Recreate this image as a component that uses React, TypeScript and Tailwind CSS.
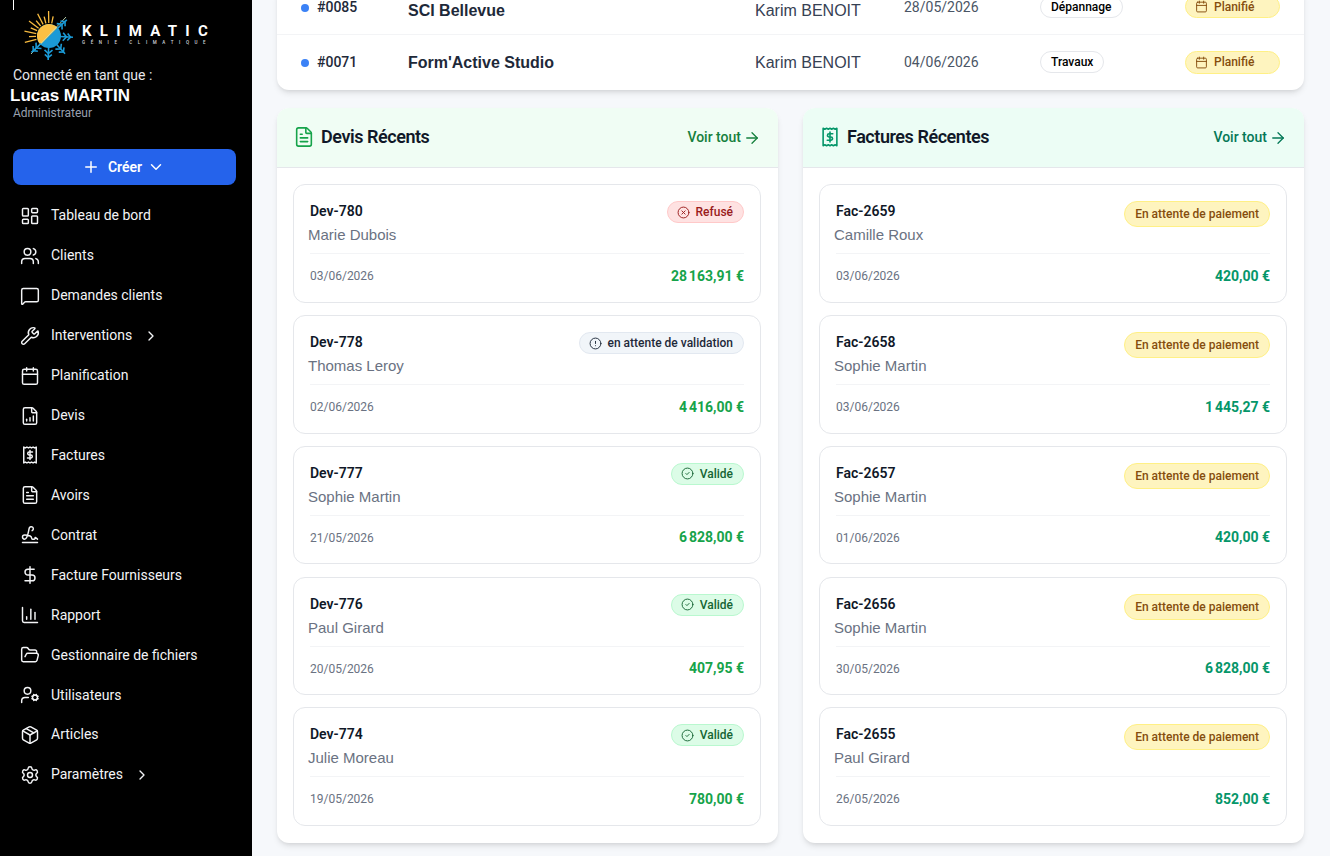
import React from "react";
import {
  LayoutDashboard, Users, MessageSquare, Wrench, Calendar, FileChartColumnIncreasing, FileText,
  Signature, DollarSign, ChartColumn, FolderOpen, UserCog, Package, Settings, ChevronRight,
  ChevronDown, Plus, ArrowRight, CircleX, CircleAlert, CircleCheck,
} from "lucide-react";

function ReceiptDollar({ className = "", strokeWidth = 2 }: { className?: string; strokeWidth?: number }) {
  return (
    <svg viewBox="0 0 24 24" fill="none" stroke="currentColor" strokeWidth={strokeWidth} strokeLinecap="round" strokeLinejoin="round" className={className}>
      <path d="M4.5 2.5l1.9 1 1.9-1 1.9 1 1.8-1 1.8 1 1.9-1 1.9 1 1.9-1v19l-1.9-1-1.9 1-1.9-1-1.8 1-1.8-1-1.9 1-1.9-1-1.9 1z" />
      <path d="M12 6.5v11" />
      <path d="M15 8.5h-4a1.75 1.75 0 0 0 0 3.5h2a1.75 1.75 0 0 1 0 3.5H9" />
    </svg>
  );
}

function Logo() {
  const rays = [165, 178, 191, 204, 217, 230, 243, 256, 269, 282];
  const arms = [-42, 3, 48, 92, 137];
  const cx = 25, cy = 26;
  return (
    <svg viewBox="0 0 50 50" className="w-[50px] h-[50px] shrink-0">
      {rays.map((a, i) => {
        const r = (a * Math.PI) / 180;
        const o = i % 2 === 0 ? 25 : 20;
        return (
          <line key={a} x1={cx + 13 * Math.cos(r)} y1={cy + 13 * Math.sin(r)} x2={cx + o * Math.cos(r)} y2={cy + o * Math.sin(r)} stroke="#f8bb3f" strokeWidth={1.3} />
        );
      })}
      <circle cx={cx} cy={cy} r={12} fill="#1b9ad6" />
      <path d={`M${cx - 8.5} ${cy + 8.5}A12 12 0 0 1 ${cx + 8.5} ${cy - 8.5}z`} fill="#fcc043" />
      <line x1={7} y1={44} x2={42} y2={7} stroke="#c8dfb8" strokeWidth={0.9} />
      {arms.map((a) => (
        <g key={a} transform={`rotate(${a} ${cx} ${cy})`} stroke="#1b9ad6" strokeWidth={1.6} fill="none">
          <line x1={cx + 11} y1={cy} x2={cx + 24} y2={cy} />
          <path d={`M${cx + 14} ${cy - 4}L${cx + 17.5} ${cy}L${cx + 14} ${cy + 4}`} />
          <path d={`M${cx + 18.5} ${cy - 3.5}L${cx + 21.5} ${cy}L${cx + 18.5} ${cy + 3.5}`} />
        </g>
      ))}
    </svg>
  );
}

const nav: { label: string; Icon: React.ComponentType<any>; chev?: boolean }[] = [
  { label: "Tableau de bord", Icon: LayoutDashboard },
  { label: "Clients", Icon: Users },
  { label: "Demandes clients", Icon: MessageSquare },
  { label: "Interventions", Icon: Wrench, chev: true },
  { label: "Planification", Icon: Calendar },
  { label: "Devis", Icon: FileChartColumnIncreasing },
  { label: "Factures", Icon: ReceiptDollar },
  { label: "Avoirs", Icon: FileText },
  { label: "Contrat", Icon: Signature },
  { label: "Facture Fournisseurs", Icon: DollarSign },
  { label: "Rapport", Icon: ChartColumn },
  { label: "Gestionnaire de fichiers", Icon: FolderOpen },
  { label: "Utilisateurs", Icon: UserCog },
  { label: "Articles", Icon: Package },
  { label: "Paramètres", Icon: Settings, chev: true },
];

function Sidebar() {
  return (
    <aside className="w-[252px] shrink-0 h-[856px] bg-black text-white overflow-hidden font-['Roboto',sans-serif]">
      <div className="w-px h-[10px] bg-white ml-[13px]" />
      <div className="flex items-center ml-[24px] h-[50px]">
        <Logo />
        <div className="ml-[8px] mt-[-2px] flex flex-col">
          <span className="text-[15px] leading-[18px] font-bold tracking-[0.55em] whitespace-nowrap">KLIMATIC</span>
          <span className="text-[4.5px] leading-[6px] font-medium tracking-[5.6px] text-gray-300 whitespace-nowrap">GÉNIE CLIMATIQUE</span>
        </div>
      </div>
      <div className="mt-[6px] pl-[13px] text-[14px] leading-[18px] text-gray-200">Connecté en tant que :</div>
      <div className="pl-[10px] mt-[2px] text-[17px] leading-[20px] font-bold font-['Liberation_Sans',sans-serif]">Lucas MARTIN</div>
      <div className="pl-[13px] text-[12px] leading-[16px] text-gray-400 -mt-[1px]">Administrateur</div>
      <button className="mt-[28px] ml-[13px] w-[223px] h-[36px] rounded-lg bg-[#2563eb] flex items-center justify-center text-[14px] font-semibold">
        <Plus className="w-[18px] h-[18px] mr-[8px]" strokeWidth={2} />
        Créer
        <ChevronDown className="w-[18px] h-[18px] ml-[5px] mr-[2px]" strokeWidth={2} />
      </button>
      <nav className="mt-[11px] flex flex-col">
        {nav.map(({ label, Icon, chev }) => (
          <div key={label} className="h-[39.93px] flex items-center pl-[20px] text-[14px] font-normal text-gray-100">
            <Icon className="w-[20px] h-[20px] shrink-0" strokeWidth={1.75} />
            <span className="ml-[11px] whitespace-nowrap">{label}</span>
            {chev && <ChevronRight className="w-[16px] h-[16px] ml-[11px]" strokeWidth={2} />}
          </div>
        ))}
      </nav>
    </aside>
  );
}

function TableRow({ id, client, date, type, first }: { id: string; client: string; date: string; type: string; first?: boolean }) {
  const up = first ? "mb-[6px]" : "";
  const upBadge = first ? "mb-[8px]" : "mb-[1px]";
  return (
    <div className={`flex items-center pl-[24px] ${first ? "h-[50px] pt-[2px] border-b border-gray-100" : "h-[55px]"}`}>
      <span className={`w-[8px] h-[8px] rounded-full bg-[#3b82f6] shrink-0 ${up}`} />
      <span className={`w-[99px] pl-[8px] text-[14px] font-medium text-gray-800 font-['Roboto',sans-serif] shrink-0 ${up}`}>{id}</span>
      <span className="w-[347px] text-[16px] font-bold text-gray-800 font-['Liberation_Sans',sans-serif] shrink-0">{client}</span>
      <span className="w-[149px] text-[16px] text-gray-700 font-['Liberation_Sans',sans-serif] shrink-0">Karim BENOIT</span>
      <span className={`w-[136px] text-[14px] text-gray-600 font-['Roboto',sans-serif] shrink-0 ${up}`}>{date}</span>
      <div className={`w-[145px] shrink-0 flex items-center ${upBadge}`}>
        <span className="inline-flex items-center h-[22px] px-[10px] rounded-full border border-gray-200 bg-white text-[12px] font-medium text-black font-['Roboto',sans-serif]">{type}</span>
      </div>
      <span className={`w-[95px] h-[23px] shrink-0 pl-[9px] rounded-full border border-yellow-200 bg-[#fef4bf] flex items-center gap-[6px] text-[12px] font-medium text-[#854d0e] font-['Roboto',sans-serif] ${upBadge}`}>
        <Calendar className="w-[13px] h-[13px]" strokeWidth={1.75} />
        Planifié
      </span>
    </div>
  );
}

type Status = "refuse" | "attente" | "valide" | "paiement";

function Badge({ status }: { status: Status }) {
  if (status === "paiement")
    return <span className="inline-flex items-center h-[26px] px-[10px] rounded-full border border-yellow-200 bg-[#fef4bf] text-[12px] font-medium text-[#854d0e] whitespace-nowrap">En attente de paiement</span>;
  const map = {
    refuse: { c: "border-red-200 bg-[#fee2e2] text-[#991b1b]", I: CircleX, t: "Refusé" },
    attente: { c: "border-slate-200 bg-[#f1f5f9] text-gray-800", I: CircleAlert, t: "en attente de validation" },
    valide: { c: "border-green-200 bg-[#dcfce7] text-[#166534]", I: CircleCheck, t: "Validé" },
  } as const;
  const { c, I, t } = map[status];
  return (
    <span className={`inline-flex items-center gap-[6px] h-[22px] pl-[9px] pr-[10px] rounded-full border text-[12px] font-medium whitespace-nowrap ${c}`}>
      <I className="w-[13px] h-[13px]" strokeWidth={1.75} />
      {t}
    </span>
  );
}

function DocCard({ id, name, date, amount, status, amountClass }: { id: string; name: string; date: string; amount: string; status: Status; amountClass: string }) {
  return (
    <div className="h-[118.6px] rounded-xl border border-gray-200 bg-white px-[16px] pt-[16px] font-['Roboto',sans-serif]">
      <div className="h-[53px] flex items-start justify-between border-b border-gray-100">
        <div>
          <div className="text-[14px] leading-[20px] font-semibold text-gray-900">{id}</div>
          <div className="-ml-[2px] mt-[4px] text-[15px] leading-[20px] text-gray-500 font-['Liberation_Sans',sans-serif]">{name}</div>
        </div>
        <Badge status={status} />
      </div>
      <div className="flex items-center justify-between h-[44px]">
        <span className="text-[12px] text-gray-500">{date}</span>
        <span className={`text-[14px] font-bold ${amountClass}`}>{amount}</span>
      </div>
    </div>
  );
}

type Doc = { id: string; name: string; date: string; amount: string; status: Status };

const devis: Doc[] = [
  { id: "Dev-780", name: "Marie Dubois", date: "03/06/2026", amount: "28\u202f163,91\u00a0€", status: "refuse" },
  { id: "Dev-778", name: "Thomas Leroy", date: "02/06/2026", amount: "4\u202f416,00\u00a0€", status: "attente" },
  { id: "Dev-777", name: "Sophie Martin", date: "21/05/2026", amount: "6\u202f828,00\u00a0€", status: "valide" },
  { id: "Dev-776", name: "Paul Girard", date: "20/05/2026", amount: "407,95\u00a0€", status: "valide" },
  { id: "Dev-774", name: "Julie Moreau", date: "19/05/2026", amount: "780,00\u00a0€", status: "valide" },
];
const factures: Doc[] = [
  { id: "Fac-2659", name: "Camille Roux", date: "03/06/2026", amount: "420,00\u00a0€", status: "paiement" },
  { id: "Fac-2658", name: "Sophie Martin", date: "03/06/2026", amount: "1\u202f445,27\u00a0€", status: "paiement" },
  { id: "Fac-2657", name: "Sophie Martin", date: "01/06/2026", amount: "420,00\u00a0€", status: "paiement" },
  { id: "Fac-2656", name: "Sophie Martin", date: "30/05/2026", amount: "6\u202f828,00\u00a0€", status: "paiement" },
  { id: "Fac-2655", name: "Paul Girard", date: "26/05/2026", amount: "852,00\u00a0€", status: "paiement" },
];

function Panel({ title, Icon, docs, headClass, iconClass, linkClass, amountClass }: { title: string; Icon: React.ComponentType<any>; docs: Doc[]; headClass: string; iconClass: string; linkClass: string; amountClass: string }) {
  return (
    <section className="flex-1 min-w-0 rounded-xl bg-white shadow-md overflow-hidden">
      <header className={`h-[60px] flex items-center justify-between pl-[16px] pr-[17px] border-b border-gray-200 font-['Roboto',sans-serif] ${headClass}`}>
        <div className="flex items-center gap-[6px] mb-[2px]">
          <Icon className={`w-[22px] h-[22px] ${iconClass}`} strokeWidth={1.75} />
          <h2 className="text-[18px] font-semibold tracking-tight text-gray-900">{title}</h2>
        </div>
        <div className={`flex items-center gap-[2px] ml-[1px] text-[14px] font-medium ${linkClass}`}>
          Voir tout
          <ArrowRight className="w-[18px] h-[18px]" strokeWidth={1.75} />
        </div>
      </header>
      <div className="pl-[16px] pr-[17px] pt-[16px] pb-[17px] flex flex-col gap-[12.2px]">
        {docs.map((d) => (
          <DocCard key={d.id} {...d} amountClass={amountClass} />
        ))}
      </div>
    </section>
  );
}

export default function App() {
  return (
    <div className="flex w-[1330px] h-[856px] overflow-hidden bg-[#f6f8fb]">
      <Sidebar />
      <main className="flex-1 min-w-0 h-[856px] overflow-hidden flex flex-col justify-end pl-[25px] pr-[26px] pb-[13px]">
        <div className="shrink-0 rounded-xl bg-white shadow-md">
          <TableRow first id="#0085" client="SCI Bellevue" date="28/05/2026" type="Dépannage" />
          <TableRow id="#0071" client="Form'Active Studio" date="04/06/2026" type="Travaux" />
        </div>
        <div className="shrink-0 mt-[18px] flex gap-[25px]">
          <Panel title="Devis Récents" Icon={FileText} docs={devis} headClass="bg-[#f0fdf4]" iconClass="text-[#16a34a]" linkClass="text-[#15803d]" amountClass="text-[#16a34a]" />
          <Panel title="Factures Récentes" Icon={ReceiptDollar} docs={factures} headClass="bg-[#ecfdf5]" iconClass="text-[#059669]" linkClass="text-[#047857]" amountClass="text-[#059669]" />
        </div>
      </main>
    </div>
  );
}
